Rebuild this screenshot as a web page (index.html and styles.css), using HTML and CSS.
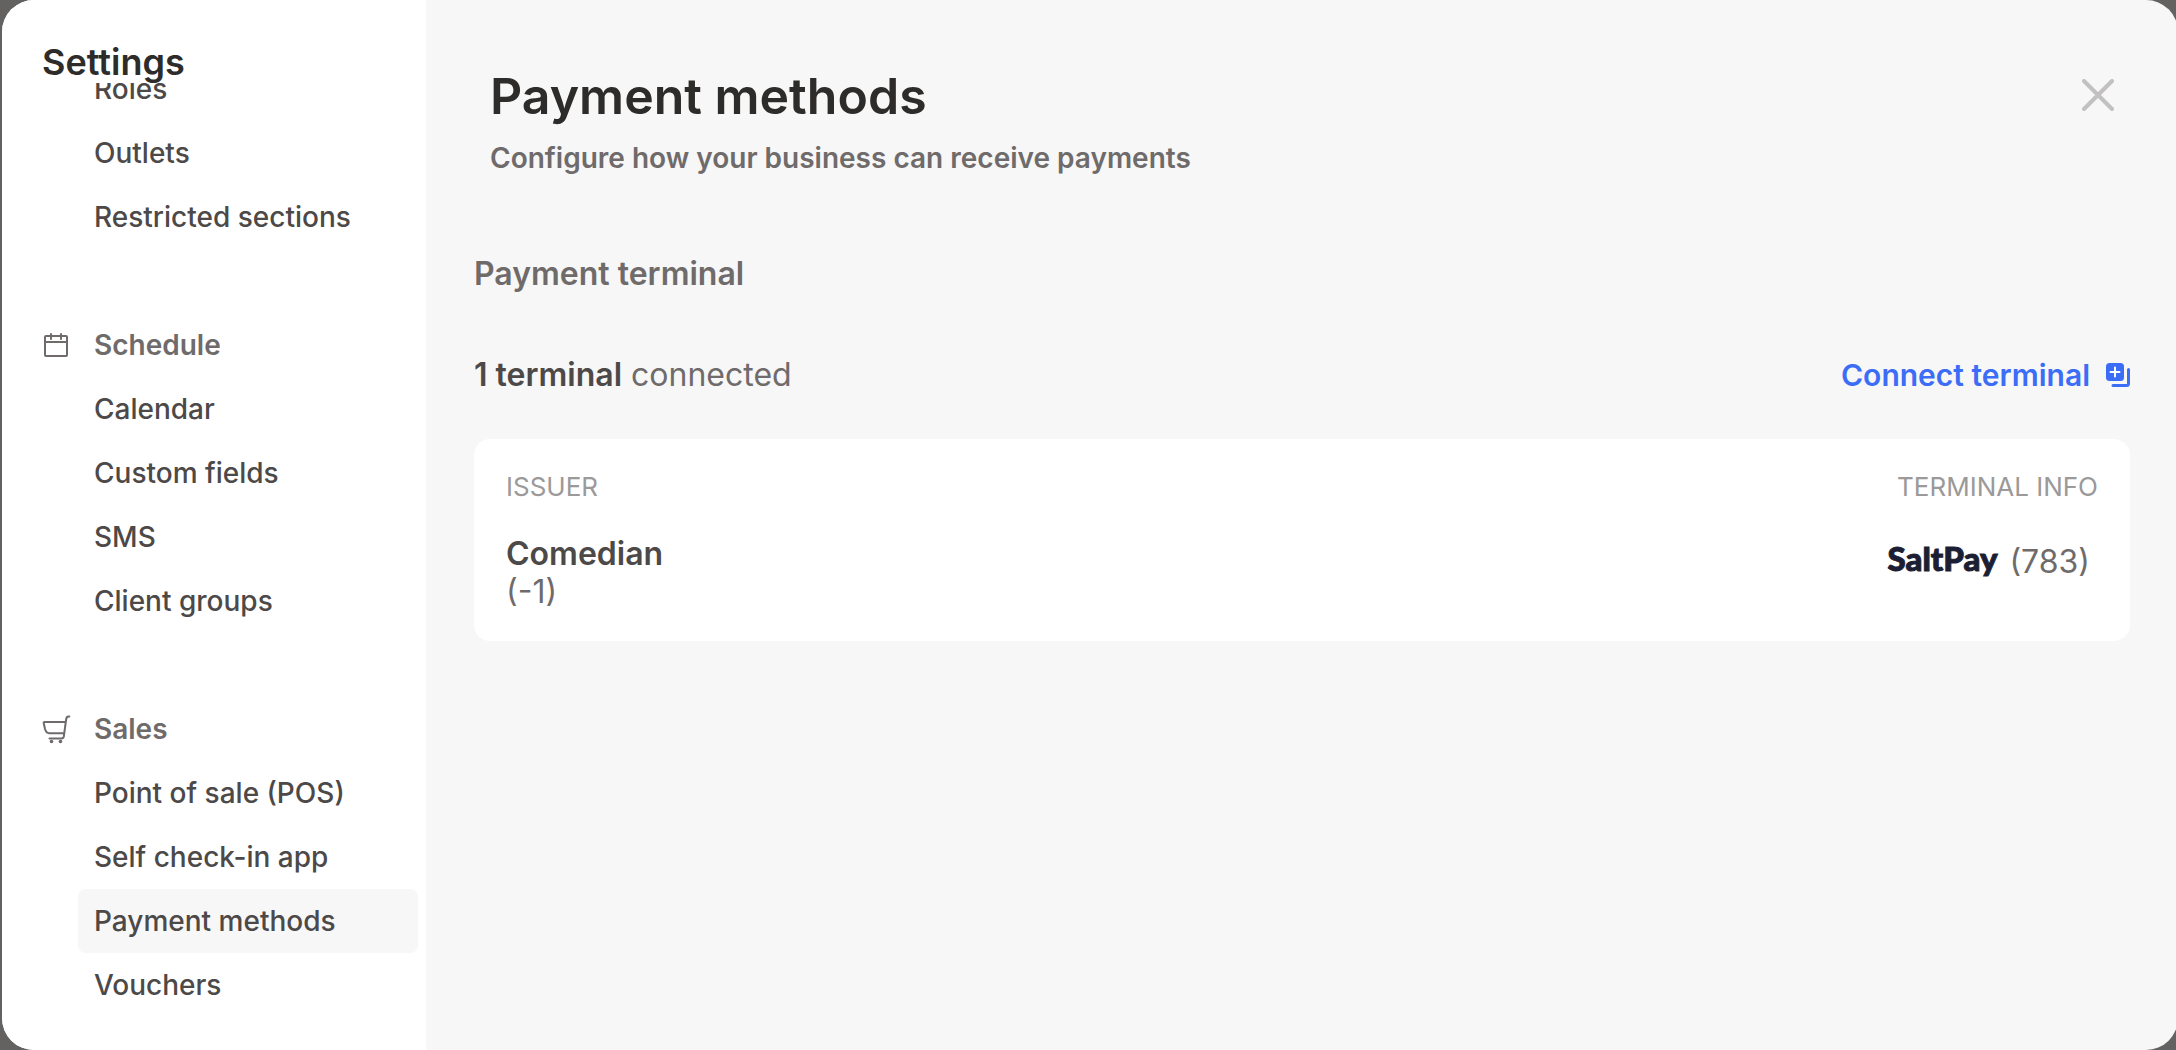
FILE: index.html
```html
<!DOCTYPE html>
<html lang="en">
<head>
  <meta charset="utf-8">
  <meta name="viewport" content="width=device-width, initial-scale=1">
  <title>Settings – Payment methods</title>
  <link rel="stylesheet" href="styles.css">
</head>
<body>
  <div class="dialog">
    <aside class="sidebar">
      <h2 class="sidebar-title">Settings</h2>
      <nav class="nav" aria-label="Settings">
        <ul class="nav-group">
          <li><a class="nav-link" href="#roles">Roles</a></li>
          <li><a class="nav-link" href="#outlets">Outlets</a></li>
          <li><a class="nav-link" href="#restricted">Restricted sections</a></li>
        </ul>
        <h3 class="nav-heading">
          <svg class="nav-icon" viewBox="0 0 28 28" aria-hidden="true">
            <rect x="3" y="5" width="22" height="20" rx="1"/>
            <path d="M3 11h22M9 3v5M19 3v5"/>
          </svg>
          Schedule
        </h3>
        <ul class="nav-group">
          <li><a class="nav-link" href="#calendar">Calendar</a></li>
          <li><a class="nav-link" href="#fields">Custom fields</a></li>
          <li><a class="nav-link" href="#sms">SMS</a></li>
          <li><a class="nav-link" href="#groups">Client groups</a></li>
        </ul>
        <h3 class="nav-heading">
          <svg class="nav-icon" viewBox="0 0 28 28" aria-hidden="true">
            <path d="M24 7H2.500Q1.500 7 1.700 8L3 14Q4.200 18.200 7 18.200H21.500M27.300 1.500Q24.600 1.200 24.200 4L21.800 21.500Q21.400 23.400 19.500 23.400H7.500"/>
            <circle class="wheel" cx="9.500" cy="26.500" r="1.800"/>
            <circle class="wheel" cx="18.500" cy="26.500" r="1.800"/>
          </svg>
          Sales
        </h3>
        <ul class="nav-group">
          <li><a class="nav-link" href="#pos">Point of sale (POS)</a></li>
          <li><a class="nav-link" href="#checkin">Self check-in app</a></li>
          <li><a class="nav-link is-active" href="#payments" aria-current="page">Payment methods</a></li>
          <li><a class="nav-link" href="#vouchers">Vouchers</a></li>
        </ul>
      </nav>
    </aside>

    <main class="content">
      <header class="page-header">
        <div>
          <h1 class="page-title">Payment methods</h1>
          <p class="page-subtitle">Configure how your business can receive payments</p>
        </div>
        <button class="close" type="button" aria-label="Close">
          <svg class="close-icon" viewBox="0 0 32 32" aria-hidden="true">
            <path d="M2 2l28 28M30 2L2 30"/>
          </svg>
        </button>
      </header>

      <section>
        <h2 class="section-title">Payment terminal</h2>
        <div class="toolbar">
          <p class="summary"><strong>1 terminal</strong> connected</p>
          <button class="connect" type="button">
            Connect terminal
            <svg class="connect-icon" viewBox="0 0 24 24" aria-hidden="true">
              <rect class="sheet" width="18" height="18" rx="3.500"/>
              <path class="plus" d="M9 4.500v9M4.500 9h9"/>
              <path class="edge" d="M22.500 6.500v14a2 2 0 0 1-2 2H7"/>
            </svg>
          </button>
        </div>
        <div class="card">
          <table class="terminals">
            <thead>
              <tr><th scope="col">Issuer</th><th scope="col">Terminal info</th></tr>
            </thead>
            <tbody>
              <tr>
                <td><strong>Comedian</strong><br>(-1)</td>
                <td><div class="terminal"><span class="brand">SaltPay</span><span>(783)</span></div></td>
              </tr>
            </tbody>
          </table>
        </div>
      </section>
    </main>
  </div>
</body>
</html>
```
FILE: styles.css
```css
* {
  box-sizing: border-box;
}

body {
  margin: 0;
  padding-left: 2px;
  overflow: hidden;
  background: #636261;
  color: #6f6b6b;
  font-family: Inter, "Liberation Sans", sans-serif;
  font-size: 32px;
  line-height: 38px;
}

h1,
h2,
h3,
p,
ul {
  margin: 0;
  padding: 0;
}

ul {
  list-style: none;
}

strong {
  color: #4c4948;
  font-weight: 600;
}

button {
  padding: 0;
  border: 0;
  background: none;
  font: inherit;
  cursor: pointer;
}

.dialog {
  display: flex;
  width: 100vw;
  height: 100vh;
  overflow: hidden;
  border-radius: 32px;
  background: #f7f7f7;
}

/* Sidebar */

.sidebar {
  display: flex;
  flex: none;
  flex-direction: column;
  width: 424px;
  background: #fff;
}

.sidebar-title {
  flex: none;
  height: 83px;
  padding: 40px 40px 0;
  color: #2d2c2a;
  font-size: 36px;
  font-weight: 600;
  line-height: 44px;
}

.nav {
  display: flex;
  flex: 1;
  flex-direction: column;
  justify-content: flex-end;
  min-height: 0;
  padding: 0 8px 33px 40px;
  overflow: hidden;
  font-size: 28px;
  line-height: 64px;
}

.nav-group {
  padding-left: 36px;
}

.nav-link {
  display: block;
  padding: 0 16px;
  border-radius: 8px;
  color: #4c4948;
  font-weight: 500;
  text-decoration: none;
}

.nav-link.is-active {
  background: #f7f7f7;
}

.nav-heading {
  display: flex;
  align-items: center;
  gap: 24px;
  margin-top: 64px;
  font-size: 28px;
  font-weight: 600;
}

.nav-icon {
  width: 28px;
  height: 28px;
  overflow: visible;
  fill: none;
  stroke: #6f6b6b;
  stroke-linecap: round;
  stroke-width: 2;
}

.nav-icon .wheel {
  fill: #6f6b6b;
  stroke: none;
}

/* Content */

.content {
  flex: 1;
  padding: 64px 48px;
}

.page-header {
  display: flex;
  align-items: flex-start;
  justify-content: space-between;
  padding: 0 16px;
}

.page-title {
  color: #2d2c2a;
  font-size: 50px;
  font-weight: 600;
  line-height: 64px;
}

.page-subtitle {
  margin-top: 12px;
  font-size: 28px;
  font-weight: 600;
  line-height: 36px;
}

.close {
  display: flex;
  padding: 15px 0;
}

.close-icon {
  width: 32px;
  height: 32px;
  fill: none;
  stroke: #c2c0c0;
  stroke-linecap: round;
  stroke-width: 4;
}

.section-title {
  margin-top: 79px;
  font-size: 32px;
  font-weight: 600;
}

.toolbar {
  display: flex;
  align-items: center;
  justify-content: space-between;
  margin: 63px 0 45px;
}

.connect {
  display: flex;
  align-items: center;
  gap: 16px;
  color: #3c6df6;
  font-size: 30px;
  font-weight: 600;
}

.connect-icon {
  width: 24px;
  height: 24px;
  fill: none;
  stroke-linecap: round;
}

.connect-icon .sheet {
  fill: #3c6df6;
}

.connect-icon .plus {
  stroke: #fff;
  stroke-width: 2;
}

.connect-icon .edge {
  stroke: #3c6df6;
  stroke-width: 3;
}

.card {
  padding: 32px 32px 30px;
  border-radius: 16px;
  background: #fff;
}

.terminals {
  width: 100%;
  border-collapse: collapse;
}

.terminals th,
.terminals td {
  padding: 0;
  text-align: left;
  vertical-align: top;
}

.terminals th {
  padding-bottom: 32px;
  color: #9b9999;
  font-size: 26px;
  font-weight: 400;
  line-height: 32px;
  text-transform: uppercase;
}

.terminals th:last-child {
  text-align: right;
}

.terminal {
  display: flex;
  align-items: flex-start;
  justify-content: flex-end;
  gap: 12px;
  padding: 8px 8px 0 0;
}

.brand {
  color: #1c1f33;
  font-family: Lato, Inter, sans-serif;
  font-size: 33px;
  font-weight: 900;
  line-height: 30px;
  -webkit-text-stroke: 1px #1c1f33;
}
```
